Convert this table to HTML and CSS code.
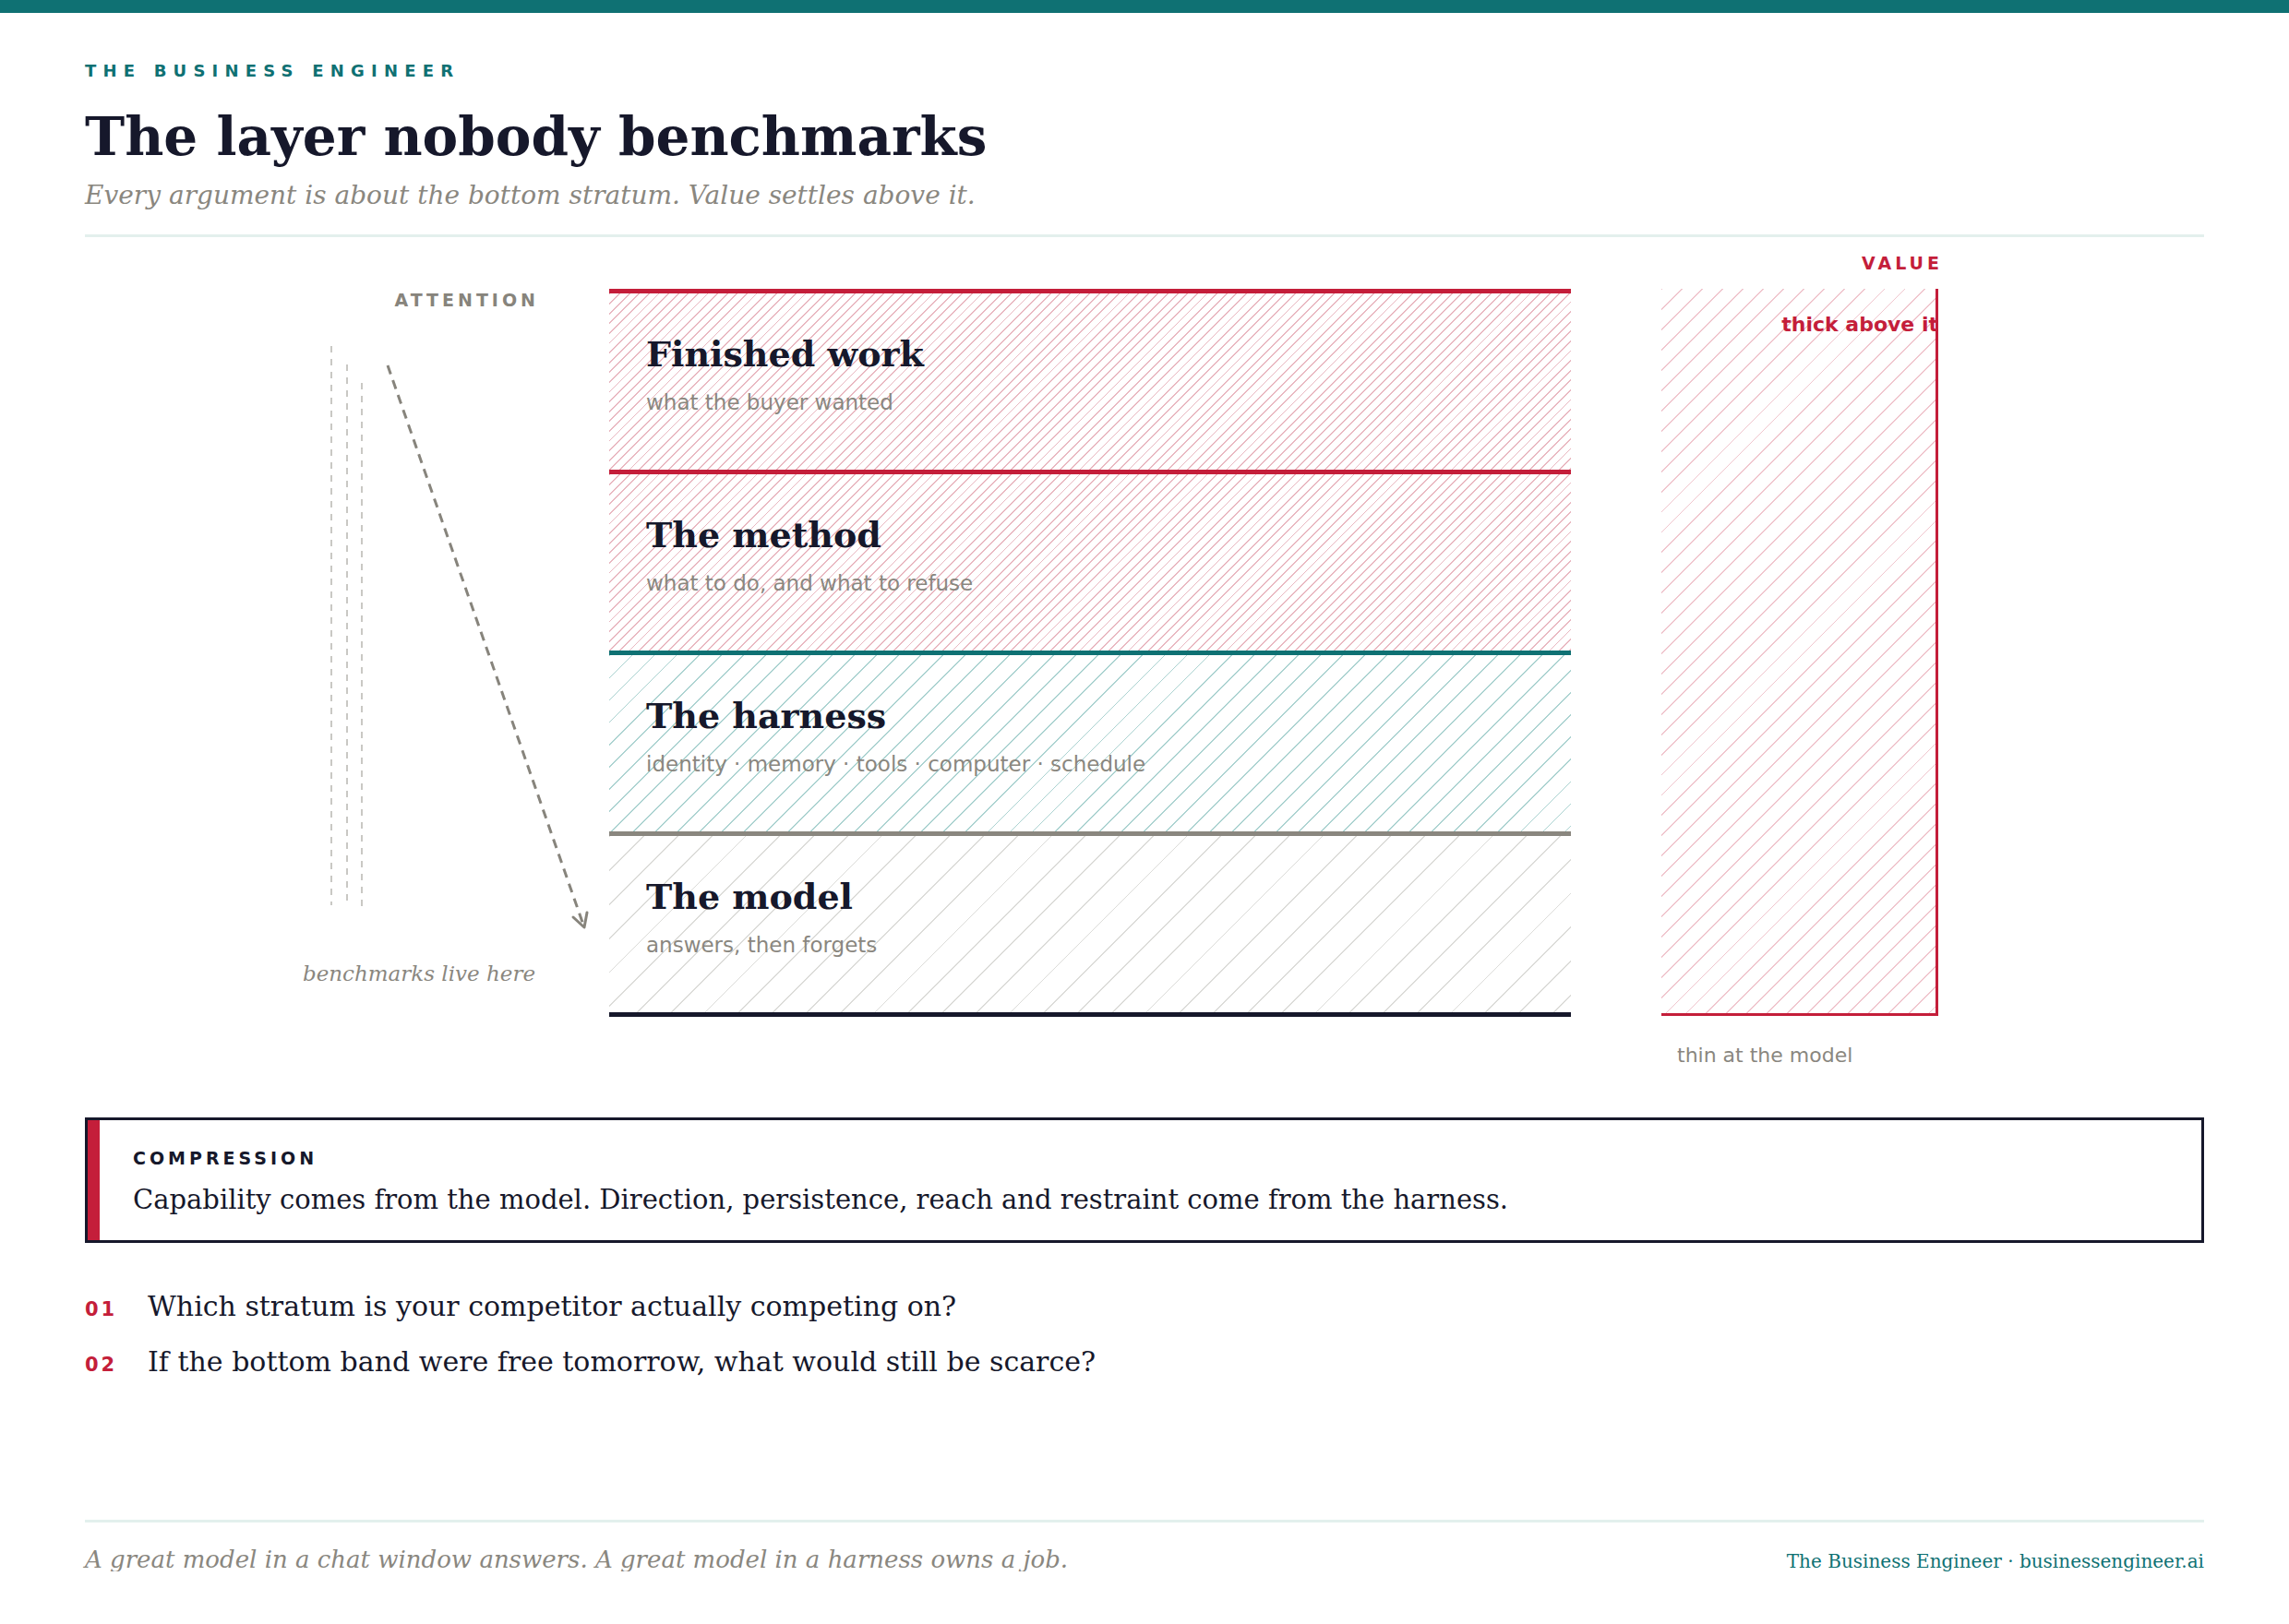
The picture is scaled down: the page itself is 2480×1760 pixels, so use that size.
FILE: index.html
```html
<!DOCTYPE html>
<html lang="en">
<head>
<meta charset="utf-8">
<title>The layer nobody benchmarks</title>
<link rel="stylesheet" href="styles.css">
</head>
<body>
<div class="topbar"></div>
<main class="page">
  <header class="head">
    <div class="kicker">THE BUSINESS ENGINEER</div>
    <h1 class="title">The layer nobody benchmarks</h1>
    <p class="subtitle">Every argument is about the bottom stratum. Value settles above it.</p>
  </header>
  <div class="rule"></div>

  <section class="diagram">
    <div class="label value-label">VALUE</div>

    <div class="attention">
      <div class="label attn-label">ATTENTION</div>
      <svg class="attn-svg" width="568" height="709" viewBox="0 0 568 709">
        <line x1="267" y1="40" x2="267" y2="646" class="faint"/>
        <line x1="284" y1="60" x2="284" y2="646" class="faint"/>
        <line x1="300" y1="80" x2="300" y2="647" class="faint"/>
        <line x1="328" y1="61" x2="541" y2="670" class="arrow"/>
        <polyline points="529,659 541,670 544,654" class="arrowhead"/>
      </svg>
      <div class="bench-note">benchmarks live here</div>
    </div>

    <div class="strata">
      <div class="band band-work">
        <div class="band-title">Finished work</div>
        <div class="band-sub">what the buyer wanted</div>
      </div>
      <div class="band band-method">
        <div class="band-title">The method</div>
        <div class="band-sub">what to do, and what to refuse</div>
      </div>
      <div class="band band-harness">
        <div class="band-title">The harness</div>
        <div class="band-sub">identity · memory · tools · computer · schedule</div>
      </div>
      <div class="band band-model">
        <div class="band-title">The model</div>
        <div class="band-sub">answers, then forgets</div>
      </div>
    </div>

    <div class="value">
      <div class="value-box"><span class="thick">thick above it</span></div>
      <div class="thin">thin at the model</div>
    </div>
  </section>

  <section class="callout">
    <div class="label callout-label">COMPRESSION</div>
    <p class="callout-text">Capability comes from the model. Direction, persistence, reach and restraint come from the harness.</p>
  </section>

  <ol class="questions">
    <li class="question"><span class="qnum">01</span><span class="qtext">Which stratum is your competitor actually competing on?</span></li>
    <li class="question"><span class="qnum">02</span><span class="qtext">If the bottom band were free tomorrow, what would still be scarce?</span></li>
  </ol>

  <footer class="foot">
    <p class="foot-quote">A great model in a chat window answers. A great model in a harness owns a job.</p>
    <p class="foot-brand">The Business Engineer · businessengineer.ai</p>
  </footer>
</main>
</body>
</html>
```

FILE: styles.css
```css
* { box-sizing: border-box; }

html, body {
  margin: 0;
  padding: 0;
  background: #ffffff;
}

body {
  font-family: "DejaVu Sans", "Liberation Sans", sans-serif;
  color: #16182b;
}

.topbar {
  height: 14px;
  background: #0f7173;
}

.page {
  padding: 0 92px;
}

.kicker {
  margin-top: 54px;
  font-family: "DejaVu Sans", sans-serif;
  font-weight: 700;
  font-size: 18px;
  line-height: 18px;
  letter-spacing: 7.2px;
  color: #0f7173;
}

.title {
  margin: 33px 0 0;
  font-family: "DejaVu Serif", serif;
  font-weight: 700;
  font-size: 58px;
  line-height: 58px;
  color: #16182b;
}

.subtitle {
  margin: 21px 0 0;
  font-family: "DejaVu Serif", serif;
  font-style: italic;
  font-size: 28px;
  line-height: 28px;
  color: #8a877f;
}

.rule {
  margin-top: 28px;
  height: 3px;
  background: #e3f0ed;
}

/* ---------- diagram ---------- */
.diagram {
  margin-top: 19px;
  display: grid;
  grid-template-columns: 568px 1042px 98px 300px;
  grid-template-rows: auto auto;
  row-gap: 18px;
  align-items: start;
}

.label {
  font-family: "DejaVu Sans", sans-serif;
  font-weight: 700;
  font-size: 19px;
  line-height: 19px;
  letter-spacing: 4px;
}

.value-label {
  grid-column: 4;
  grid-row: 1;
  justify-self: end;
  margin-right: -5px;
  color: #c41e3a;
}

.attention {
  grid-column: 1;
  grid-row: 2;
  display: flex;
  flex-direction: column;
}

.attn-label {
  align-self: flex-end;
  margin: 3px 76px 0 0;
  color: #87847c;
}

.attn-svg {
  display: block;
}

.attn-svg .faint {
  stroke: #c9c8c4;
  stroke-width: 2;
  stroke-dasharray: 7 7;
  fill: none;
}

.attn-svg .arrow {
  stroke: #87847c;
  stroke-width: 3;
  stroke-dasharray: 10 7;
  fill: none;
}

.attn-svg .arrowhead {
  stroke: #87847c;
  stroke-width: 3;
  stroke-linecap: round;
  stroke-linejoin: round;
  fill: none;
}

.bench-note {
  align-self: flex-end;
  margin-right: 80px;
  font-family: "DejaVu Serif", serif;
  font-style: italic;
  font-size: 23px;
  line-height: 23px;
  color: #8a877f;
}

.strata {
  grid-column: 2;
  grid-row: 2;
  display: flex;
  flex-direction: column;
  border-bottom: 5px solid #16182b;
}

.band {
  height: 196px;
  padding: 47px 0 0 40px;
  border-top: 5px solid #c41e3a;
}

.band-work,
.band-method {
  background: repeating-linear-gradient(135deg, #e9b8c1 0 1.3px, rgba(255,255,255,0) 1.3px 7.5px);
}

.band-harness {
  border-top-color: #0f7173;
  background: repeating-linear-gradient(135deg, #acd3d1 0 1.3px, rgba(255,255,255,0) 1.3px 17px);
}

.band-model {
  border-top-color: #8a877f;
  background: repeating-linear-gradient(135deg, #dcdcd9 0 1.3px, rgba(255,255,255,0) 1.3px 26px);
}

.band-title {
  font-family: "DejaVu Serif", serif;
  font-weight: 700;
  font-size: 38px;
  line-height: 38px;
  color: #16182b;
}

.band-sub {
  margin-top: 22px;
  font-family: "DejaVu Sans", sans-serif;
  font-size: 23px;
  line-height: 23px;
  color: #8a877f;
}

.value {
  grid-column: 4;
  grid-row: 2;
  display: flex;
  flex-direction: column;
}

.value-box {
  height: 788px;
  padding-top: 28px;
  display: flex;
  justify-content: flex-end;
  align-items: flex-start;
  border-right: 3px solid #c41e3a;
  border-bottom: 3px solid #c41e3a;
  background: repeating-linear-gradient(135deg, #f0c6ce 0 1.3px, rgba(255,255,255,0) 1.3px 15.5px);
}

.thick {
  margin-right: -3px;
  font-family: "DejaVu Sans", sans-serif;
  font-weight: 700;
  font-size: 22px;
  line-height: 22px;
  color: #c41e3a;
}

.thin {
  margin: 32px 0 0 17px;
  font-family: "DejaVu Sans", sans-serif;
  font-size: 22px;
  line-height: 22px;
  color: #8a877f;
}

/* ---------- callout ---------- */
.callout {
  margin-top: 56px;
  height: 136px;
  padding: 32px 0 0 49px;
  border: 3px solid #16182b;
  box-shadow: inset 13px 0 0 #c41e3a;
}

.callout-label {
  color: #16182b;
}

.callout-text {
  margin: 21px 0 0;
  font-family: "DejaVu Serif", serif;
  font-size: 29px;
  line-height: 29px;
  color: #16182b;
}

/* ---------- questions ---------- */
.questions {
  list-style: none;
  margin: 39px 0 0;
  padding: 0;
}

.question {
  display: flex;
  align-items: baseline;
  height: 60px;
  line-height: 60px;
}

.qnum {
  width: 68px;
  flex: none;
  font-family: "DejaVu Sans", sans-serif;
  font-weight: 700;
  font-size: 21px;
  letter-spacing: 3px;
  color: #c41e3a;
}

.qtext {
  font-family: "DejaVu Serif", serif;
  font-size: 30px;
  color: #16182b;
}

/* ---------- footer ---------- */
.foot {
  margin-top: 141px;
  padding-top: 27px;
  border-top: 3px solid #e3f0ed;
  display: flex;
  justify-content: space-between;
  align-items: baseline;
}

.foot-quote {
  margin: 0;
  font-family: "DejaVu Serif", serif;
  font-style: italic;
  font-size: 26px;
  line-height: 26px;
  color: #8a877f;
}

.foot-brand {
  margin: 0;
  font-family: "DejaVu Serif", serif;
  font-size: 20px;
  line-height: 20px;
  color: #0f7173;
}
```
